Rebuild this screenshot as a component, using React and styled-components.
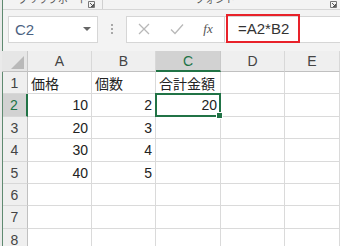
import React from "react";
import styled, { createGlobalStyle } from "styled-components";

const Global = createGlobalStyle`
  html, body { margin: 0; padding: 0; }
  body {
    width: 340px; height: 246px; overflow: hidden;
    background: #f3f3f3;
    font-family: "Liberation Sans", "Noto Sans CJK JP", sans-serif;
  }
`;

const Window = styled.div`
  width: 340px; height: 246px; overflow: hidden;
  display: flex; flex-direction: column;
  box-sizing: border-box;
  border-left: 2px solid #eaeaea;
  position: relative;
  &::before {
    content: ""; position: absolute; left: 0; top: 0; bottom: 0;
    width: 1px; background: #5f8a70;
  }
`;

const Ribbon = styled.div`
  height: 9px; flex: none; overflow: hidden;
  border-bottom: 1px solid #d6d6d6;
  background: #f3f3f3;
  display: flex; align-items: flex-start;
  font-family: "Noto Sans CJK JP", sans-serif;
  font-size: 10px; color: #555;
`;

const GroupLabel = styled.div`
  width: ${p => p.w}px; flex: none;
  padding-left: ${p => p.pl}px;
  box-sizing: border-box;
  display: flex; align-items: flex-start;
  border-right: ${p => (p.sep ? "1px solid #d0d0d0" : "none")};
  height: 9px;
`;

const LabelText = styled.span`
  display: block; line-height: 12px; margin-top: -7px; white-space: nowrap;
`;

const Launcher = styled.svg`
  margin-left: auto; margin-right: ${p => p.mr}px; margin-top: 1px; flex: none;
`;

const FormulaBar = styled.div`
  height: 38px; flex: none;
  display: flex; align-items: center;
  padding-left: 6px;
  background: #f3f3f3;
`;

const NameBox = styled.div`
  width: 90px; height: 27px; box-sizing: border-box;
  background: #fff; border: 1px solid #d6d6d6;
  display: flex; align-items: center; padding: 0 6px;
  font-size: 15px; color: #4b6282;
`;

const Caret = styled.span`
  margin-left: auto; width: 0; height: 0;
  border-left: 4px solid transparent; border-right: 4px solid transparent;
  border-top: 4px solid #666;
`;

const Dots = styled.div`
  width: 28px; display: flex; flex-direction: column; align-items: center; gap: 2px;
  & > span { width: 2px; height: 2px; background: #a8a8a8; }
`;

const FxBox = styled.div`
  width: 98px; height: 27px; box-sizing: border-box;
  background: #fff; border: 1px solid #d6d6d6; border-right: none;
  display: flex; align-items: center;
`;

const FxBtn = styled.div`
  width: ${p => p.w}px; display: flex; justify-content: center; align-items: center;
`;

const Fx = styled.span`
  font-family: "Liberation Serif", serif; font-style: italic; font-size: 13px; color: #555;
`;

const FormulaInput = styled.div`
  flex: 1; height: 27px; box-sizing: border-box;
  background: #fff; border: 1px solid #d6d6d6; border-right: none;
  display: flex; align-items: center; padding-left: 1px;
`;

const Highlight = styled.span`
  display: inline-flex; align-items: center;
  height: 29px; box-sizing: border-box;
  border: 2px solid #e8222a; padding: 0 9px 0 10px;
  font-size: 15px; color: #333;
  margin-top: -2px;
`;

const Sheet = styled.div`
  margin-top: 3px; flex: 1;
  display: grid;
  grid-template-columns: 26px 64px 64px 65px 64px 1fr;
  grid-template-rows: 21px 22px 23px 22px 23px 22px 22px 23px 22px;
  background: #fff;
`;

const Corner = styled.div`
  background: #e6e6e6; position: relative;
  border-right: 1px solid #c8c8c8; border-bottom: 1px solid #c0c0c0;
  box-sizing: border-box;
  &::after {
    content: ""; position: absolute; right: 3px; bottom: 2px;
    width: 0; height: 0;
    border-left: 13px solid transparent; border-bottom: 13px solid #b9b9b9;
  }
`;

const ColHead = styled.div`
  box-sizing: border-box;
  background: ${p => (p.sel ? "#d2d2d2" : "#efefef")};
  color: ${p => (p.sel ? "#217346" : "#444")};
  border-right: 1px solid ${p => (p.sel ? "#c8c8c8" : "#d8d8d8")};
  border-bottom: ${p => (p.sel ? "2px solid #217346" : "1px solid #c0c0c0")};
  display: flex; align-items: center; justify-content: center;
  font-size: 14px;
`;

const RowHead = styled.div`
  box-sizing: border-box;
  background: ${p => (p.sel ? "#d2d2d2" : "#efefef")};
  color: ${p => (p.sel ? "#217346" : "#444")};
  border-right: ${p => (p.sel ? "2px solid #217346" : "1px solid #c0c0c0")};
  border-bottom: 1px solid #d8d8d8;
  display: flex; align-items: center; justify-content: center;
  font-size: 14px;
`;

const Cell = styled.div`
  box-sizing: border-box;
  border-right: 1px solid #dadada; border-bottom: 1px solid #dadada;
  display: flex; align-items: center;
  justify-content: ${p => (p.num ? "flex-end" : "flex-start")};
  padding: 0 3px;
  font-size: 14px; color: #222;
  font-family: ${p => (p.num ? `"Liberation Sans", sans-serif` : `"Noto Sans CJK JP", sans-serif`)};
  white-space: nowrap;
  position: relative;
  ${p => p.active && `
    border: 2px solid #217346;
    margin: -1px 0 0 -1px;
    padding-right: 2px;
    &::after {
      content: ""; position: absolute; right: -4px; bottom: -4px;
      width: 5px; height: 5px; background: #217346; border: 1px solid #fff;
      z-index: 2;
    }
  `}
`;

const cols = ["A", "B", "C", "D", "E"];
const data = [
  ["価格", "個数", "合計金額", "", ""],
  ["10", "2", "20", "", ""],
  ["20", "3", "", "", ""],
  ["30", "4", "", "", ""],
  ["40", "5", "", "", ""],
  ["", "", "", "", ""],
  ["", "", "", "", ""],
  ["", "", "", "", ""],
];

const LauncherIcon = ({ mr }) => (
  <Launcher mr={mr} width="7" height="7" viewBox="0 0 7 7">
    <path d="M0.5 0.5 H6.5 V6.5 H0.5 Z" stroke="#777" strokeWidth="1" fill="none" />
    <path d="M2 2 L5.5 5.5 M3 5.5 H5.5 V3" stroke="#555" strokeWidth="1" fill="none" />
  </Launcher>
);

export default function App() {
  return (
    <>
      <Global />
      <Window>
        <Ribbon>
          <GroupLabel w={101} pl={16} sep>
            <LabelText>クリップボード</LabelText>
            <LauncherIcon mr={7} />
          </GroupLabel>
          <GroupLabel w={237} pl={92}>
            <LabelText>フォント</LabelText>
            <LauncherIcon mr={3} />
          </GroupLabel>
        </Ribbon>
        <FormulaBar>
          <NameBox>
            C2
            <Caret />
          </NameBox>
          <Dots>
            <span />
            <span />
            <span />
          </Dots>
          <FxBox>
            <FxBtn w={34}>
              <svg width="12" height="12" viewBox="0 0 12 12">
                <path d="M1 1 L11 11 M11 1 L1 11" stroke="#b8b8b8" strokeWidth="1.3" fill="none" />
              </svg>
            </FxBtn>
            <FxBtn w={32}>
              <svg width="14" height="12" viewBox="0 0 14 12">
                <path d="M1 6.5 L5 10.5 L13 1.5" stroke="#b8b8b8" strokeWidth="1.3" fill="none" />
              </svg>
            </FxBtn>
            <FxBtn w={30}>
              <Fx>fx</Fx>
            </FxBtn>
          </FxBox>
          <FormulaInput>
            <Highlight>=A2*B2</Highlight>
          </FormulaInput>
        </FormulaBar>
        <Sheet>
          <Corner />
          {cols.map(c => (
            <ColHead key={c} sel={c === "C"}>
              {c}
            </ColHead>
          ))}
          {data.map((row, r) => (
            <React.Fragment key={r}>
              <RowHead sel={r === 1}>{r + 1}</RowHead>
              {row.map((v, c) => (
                <Cell key={c} num={/^\d+$/.test(v)} active={r === 1 && c === 2}>
                  {v}
                </Cell>
              ))}
            </React.Fragment>
          ))}
        </Sheet>
      </Window>
    </>
  );
}
